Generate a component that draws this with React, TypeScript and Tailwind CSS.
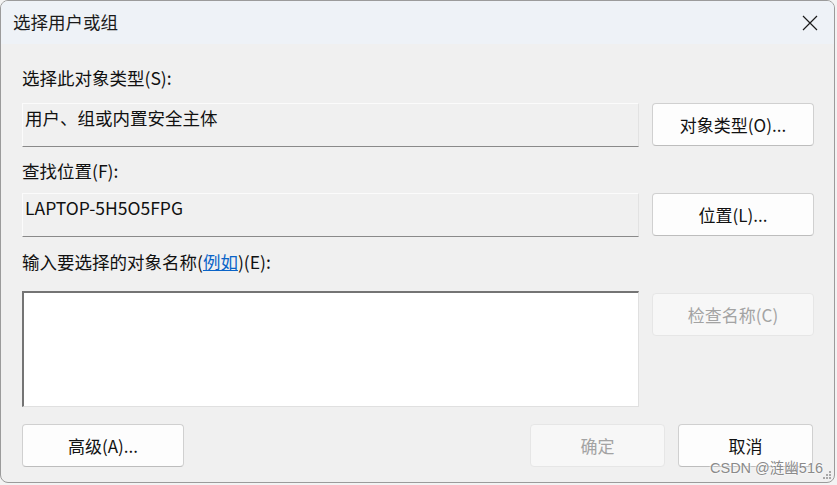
import React from 'react';

const font = { fontFamily: '"Noto Sans CJK SC", "Noto Sans", sans-serif' };

function Button({ children, disabled, wide = 'w-[162px]' }: { children: React.ReactNode; disabled?: boolean; wide?: string }) {
  return (
    <button
      className={
        disabled
          ? `${wide} h-[43px] rounded-[4px] border border-[#e6e6e6] bg-[#f7f7f7] text-[17px] text-[#a3a3a3]`
          : `${wide} h-[43px] rounded-[4px] border border-[#d0d0d0] border-b-[#bdbdbd] bg-[#fdfdfd] text-[17px] text-[#111]`
      }
    >
      {children}
    </button>
  );
}

function Field({ children }: { children: React.ReactNode }) {
  return (
    <div className="w-[617px] h-[44px] border border-t-[#fbfbfb] border-l-[#fbfbfb] border-r-[#e2e2e2] border-b-[#8a8a8a] bg-[#f0f0f0] pl-[2px] pt-[4px] text-[17.5px] leading-[20px] text-[#111]">
      {children}
    </div>
  );
}

export default function App() {
  return (
    <div className="w-[837px] h-[485px] bg-[#f3f3f3] overflow-hidden" style={font}>
      <div className="relative w-[835px] h-[483px] rounded-[8px] border border-[#9b9b9b] bg-[#f0f0f0] overflow-hidden flex flex-col">
        {/* Title bar */}
        <div className="h-[43px] bg-[#eef2f7] flex items-center justify-between pl-[12px] pr-[16px]">
          <span className="text-[17.5px] text-[#1a1a1a]">选择用户或组</span>
          <svg width="16" height="16" viewBox="0 0 16 16">
            <path d="M1 1 L15 15 M15 1 L1 15" stroke="#1a1a1a" strokeWidth="1.2" />
          </svg>
        </div>

        {/* Body */}
        <div className="flex flex-col pl-[21px] text-[#111]">
          <div className="mt-[24px] text-[17.5px] leading-[20px]">选择此对象类型(S):</div>
          <div className="mt-[15px] flex gap-[13px] items-start">
            <Field>用户、组或内置安全主体</Field>
            <Button>对象类型(O)...</Button>
          </div>

          <div className="mt-[14px] text-[17.5px] leading-[20px]">查找位置(F):</div>
          <div className="mt-[12px] flex gap-[13px] items-start">
            <Field>LAPTOP-5H5O5FPG</Field>
            <Button>位置(L)...</Button>
          </div>

          <div className="mt-[15px] text-[17.5px] leading-[20px]">
            输入要选择的对象名称(<span className="text-[#0a64c8] underline">例如</span>)(E):
          </div>
          <div className="mt-[19px] flex gap-[13px] items-start">
            <div className="w-[617px] h-[116px] bg-white border-t-2 border-l-2 border-t-[#747474] border-l-[#747474] border-r border-b border-r-[#e0e0e0] border-b-[#e0e0e0]" />
            <div className="mt-[2px]">
              <Button disabled>检查名称(C)</Button>
            </div>
          </div>

          <div className="mt-[17px] flex items-start">
            <Button>高级(A)...</Button>
            <div className="ml-[346px]">
              <Button disabled wide="w-[135px]">确定</Button>
            </div>
            <div className="ml-[13px]">
              <Button wide="w-[135px]">取消</Button>
            </div>
          </div>
        </div>

        {/* watermark */}
        <div
          className="absolute left-[709px] top-[458px] text-[14.5px] leading-[18px] text-[#8a8a8a]"
          style={{ fontFamily: '"Liberation Sans", "Noto Sans CJK SC", sans-serif', textShadow: '0 0 2px #fff, 0 0 2px #fff' }}
        >
          CSDN @涟幽516
        </div>
        {/* resize grip */}
        <div className="absolute right-[3px] bottom-[3px] grid grid-cols-3 gap-[1px] w-[8px]">
          <span className="w-[2px] h-[2px]" />
          <span className="w-[2px] h-[2px]" />
          <span className="w-[2px] h-[2px] bg-[#a8a8a8]" />
          <span className="w-[2px] h-[2px]" />
          <span className="w-[2px] h-[2px] bg-[#a8a8a8]" />
          <span className="w-[2px] h-[2px] bg-[#a8a8a8]" />
          <span className="w-[2px] h-[2px] bg-[#a8a8a8]" />
          <span className="w-[2px] h-[2px] bg-[#a8a8a8]" />
          <span className="w-[2px] h-[2px] bg-[#a8a8a8]" />
        </div>
      </div>
    </div>
  );
}
